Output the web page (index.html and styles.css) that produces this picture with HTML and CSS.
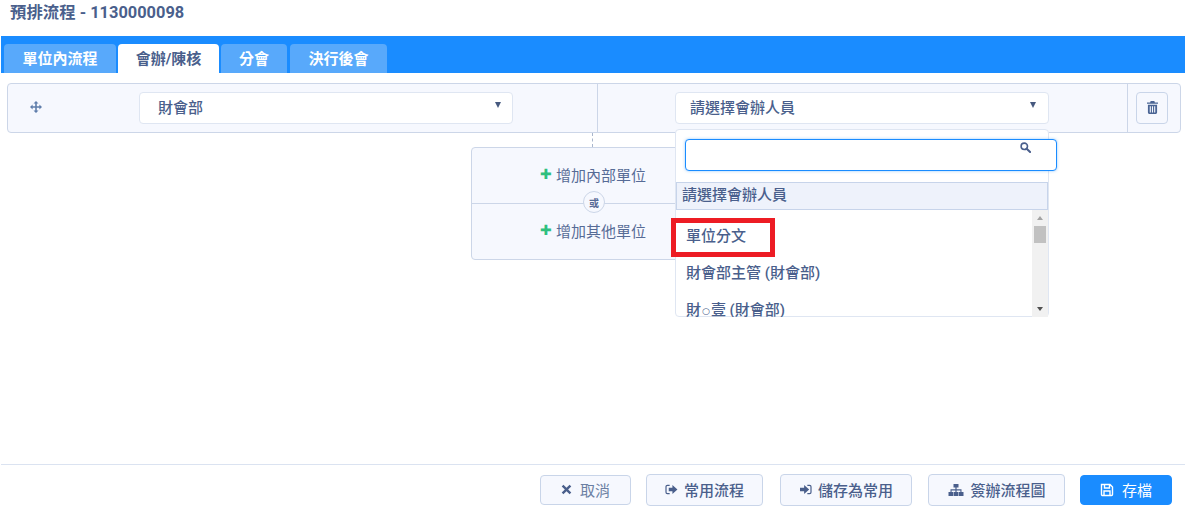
FILE: index.html
```html
<!DOCTYPE html>
<html lang="zh-Hant">
<head>
<meta charset="utf-8">
<title>預排流程</title>
<link rel="stylesheet" href="styles.css">
</head>
<body>
<div class="page">
  <h1 class="title">預排流程 - 1130000098</h1>
  <nav class="tabbar">
    <a class="tab tab-a">單位內流程</a>
    <a class="tab tab-b active">會辦/陳核</a>
    <a class="tab tab-c">分會</a>
    <a class="tab tab-d">決行後會</a>
  </nav>
  <main class="content">
    <div class="row">
      <div class="cell cell-move">
        <svg class="move" viewBox="0 0 12 12" width="12" height="12"><path d="M6 0 8.500 2.600H6.800V5.200H9.400V3.500L12 6 9.400 8.500V6.800H6.800V9.400H8.500L6 12 3.500 9.400H5.200V6.800H2.600V8.500L0 6 2.600 3.500V5.200H5.200V2.600H3.500Z"/></svg>
        <div class="select select-unit"><span>財會部</span><i class="caret"></i></div>
      </div>
      <div class="cell cell-person">
        <div class="select select-person"><span>請選擇會辦人員</span><i class="caret"></i></div>
      </div>
      <div class="cell cell-del">
        <button class="icon-btn" aria-label="刪除">
          <svg viewBox="0 0 12 14" width="11" height="13"><path d="M4 0H8L8.600 1.500H12V3H0V1.500H3.400ZM1 4H11V12.500C11 13.300 10.400 14 9.600 14H2.400C1.600 14 1 13.300 1 12.500ZM3 5.500V12.500H4.200V5.500ZM5.400 5.500V12.500H6.600V5.500ZM7.800 5.500V12.500H9V5.500Z"/></svg>
        </button>
      </div>
    </div>
    <div class="connector"></div>
    <div class="addbox">
      <div class="addline"><b class="plus">✚</b>增加內部單位</div>
      <div class="addline addline-b"><b class="plus">✚</b>增加其他單位</div>
      <span class="or">或</span>
    </div>
    <div class="dropdown">
      <div class="search">
        <svg viewBox="0 0 12 12" width="11" height="11"><circle cx="4.700" cy="4.700" r="3.500" fill="none" stroke="currentColor" stroke-width="1.700"/><path d="M7.300 7.300 11 11" stroke="currentColor" stroke-width="2.200" stroke-linecap="round"/></svg>
      </div>
      <div class="opt-head">請選擇會辦人員</div>
      <div class="opt-list">
        <ul class="opts">
          <li class="opt">單位分文</li>
          <li class="opt">財會部主管 (財會部)</li>
          <li class="opt">財<span class="ring">○</span>壹 (財會部)</li>
        </ul>
        <div class="scrollbar">
          <i class="arrow up"></i>
          <i class="thumb"></i>
          <i class="arrow down"></i>
        </div>
      </div>
      <div class="marker"></div>
    </div>
  </main>
  <footer class="footer">
    <button class="btn btn-cancel"><svg viewBox="0 0 12 12" width="11" height="11"><path d="M2.600.8 6 4.200 9.400.8 11.200 2.600 7.800 6 11.200 9.400 9.400 11.200 6 7.800 2.600 11.200.8 9.400 4.200 6 .8 2.600Z"/></svg><span class="light muted">取消</span></button>
    <button class="btn btn-flow"><svg viewBox="0 0 14 12" width="13" height="11"><path d="M5 1.500H2.500C1.700 1.500 1 2.200 1 3V9C1 9.800 1.700 10.500 2.500 10.500H5" fill="none" stroke="currentColor" stroke-width="1.300"/><path d="M8 1 13.500 6 8 11V8H4V4H8Z"/></svg>常用流程</button>
    <button class="btn btn-save"><svg viewBox="0 0 14 12" width="13" height="11"><path d="M9 1.500H11.500C12.300 1.500 13 2.200 13 3V9C13 9.800 12.300 10.500 11.500 10.500H9" fill="none" stroke="currentColor" stroke-width="1.300"/><path d="M5.500 1 11 6 5.500 11V8H1V4H5.500Z"/></svg>儲存為常用</button>
    <button class="btn btn-chart"><svg viewBox="0 0 16 12" width="16" height="12"><path d="M5.500 0H10.500V3.500H8.600V5.300H13.500V8H15.500V12H10.500V8H12.400V6.500H8.600V8H10V12H6V8H7.400V6.500H3.600V8H5.500V12H.5V8H2.500V5.300H7.400V3.500H5.500Z"/></svg>簽辦流程圖</button>
    <button class="btn btn-primary"><svg viewBox="0 0 14 14" width="14" height="14"><path d="M1.500 1.500H10L12.500 4V11.500C12.500 12 12 12.500 11.500 12.500H2.500C2 12.500 1.500 12 1.500 11.500ZM4.500 1.500V5H9.500V1.500M4 12.500V8H10V12.500" fill="none" stroke="currentColor" stroke-width="1.400"/></svg><span class="light">存檔</span></button>
  </footer>
</div>
</body>
</html>
```
FILE: styles.css
```css
* { box-sizing: border-box; }
html, body { margin: 0; padding: 0; }
body {
  width: 1185px;
  height: 511px;
  overflow: hidden;
  background: #fff;
  color: #4a5f8c;
  font-family: Roboto, "Noto Sans CJK TC", sans-serif;
}
.page { display: flex; flex-direction: column; height: 511px; }
.title {
  margin: 0;
  height: 36px;
  padding: 2px 0 0 10px;
  font-size: 16.400px;
  line-height: 22px;
  font-weight: 700;
  color: #4a5f8c;
}
.tabbar {
  display: flex;
  gap: 2px;
  height: 37px;
  margin-left: 1px;
  padding: 8px 0 0 3px;
  background: #1a8cff;
}
.tab {
  display: flex;
  align-items: center;
  justify-content: center;
  height: 29px;
  padding-bottom: 2px;
  border-radius: 4px 4px 0 0;
  background: #58a9fb;
  color: #fff;
  font-size: 15px;
  font-weight: 700;
}
.tab-a { width: 112px; }
.tab-b { width: 101px; }
.tab-c { width: 66px; }
.tab-d { width: 97px; margin-left: 1px; }
.tab.active { background: #fff; color: #4a5f8c; }

.content { position: relative; flex: 1; padding: 10px 4px 0 7px; }
.row {
  display: flex;
  height: 50px;
  border: 1px solid #ccd6e8;
  border-radius: 4px;
  background: #f6f8fe;
}
.cell { display: flex; align-items: center; height: 100%; }
.cell-move { width: 590px; padding-left: 22px; border-right: 1px solid #ccd6e8; }
.cell-person { width: 530px; padding-left: 77px; border-right: 1px solid #ccd6e8; }
.cell-del { flex: 1; padding-left: 8px; }
.move { fill: #5f7dab; flex: none; margin-top: -3px; }
.select {
  display: flex;
  align-items: center;
  justify-content: space-between;
  height: 32px;
  padding: 0 12px 3px 14px;
  margin-top: -1px;
  border: 1px solid #dfe6f2;
  border-radius: 4px;
  background: #fff;
  font-size: 15px;
  font-weight: 500;
}
.select-unit { width: 374px; margin-left: 97px; padding-left: 18px; padding-right: 11px; }
.select-person { width: 374px; }
.caret {
  width: 0;
  height: 0;
  margin-top: -3px;
  border-left: 3.500px solid transparent;
  border-right: 3.500px solid transparent;
  border-top: 6px solid #46597f;
}
.icon-btn {
  display: flex;
  align-items: center;
  justify-content: center;
  width: 32px;
  height: 32px;
  margin-top: -1px;
  padding: 0;
  border: 1px solid #c9d5e9;
  border-radius: 4px;
  background: #f6f8fe;
  fill: #4a6494;
}
.connector { width: 0; height: 14px; margin-left: 585px; border-left: 1px dashed #a9b6cc; }
.addbox {
  position: relative;
  width: 230px;
  height: 113px;
  margin-left: 464px;
  border: 1px solid #ccd6e8;
  border-radius: 4px;
  background: #f6f8fe;
  font-size: 15px;
  color: #566b96;
}
.addline {
  display: flex;
  align-items: center;
  height: 55px;
  padding: 0 0 3px 68px;
}
.addline-b { height: 56px; border-top: 1px solid #ccd6e8; padding-bottom: 3px; }
.plus { width: 16px; color: #2fc07f; font-size: 14px; line-height: 1; font-family: "DejaVu Sans", sans-serif; }
.or {
  position: absolute;
  left: 111px;
  top: 43px;
  display: flex;
  align-items: center;
  justify-content: center;
  width: 22px;
  height: 22px;
  border: 1px solid #ccd6e8;
  border-radius: 50%;
  background: #f6f8fe;
  font-size: 10px;
  font-weight: 700;
}
.dropdown {
  position: absolute;
  left: 675px;
  top: 56px;
  width: 374px;
  height: 188px;
  border: 1px solid #dfe6f2;
  border-radius: 4px;
  background: #fff;
}
.search {
  position: relative;
  display: flex;
  justify-content: flex-end;
  width: 372px;
  height: 32px;
  margin: 9px 0 11px 9px;
  padding: 2px 25px 0 0;
  border: 1px solid #1a8cff;
  border-radius: 4px;
  background: #fff;
  box-shadow: 0 0 3px rgba(43, 149, 251, .5);
  color: #4a5f8c;
}
.opt-head {
  height: 28px;
  padding-left: 5px;
  border: 1px solid #c7d4ea;
  background: #eef2fb;
  font-size: 15px;
  line-height: 25px;
  font-weight: 500;
}
.opt-list { display: flex; height: 107px; }
.opts {
  flex: 1;
  height: 107px;
  margin: 0;
  padding: 8px 0 0;
  overflow: hidden;
  list-style: none;
  font-size: 15px;
  font-weight: 500;
}
.opt { height: 37px; padding-left: 10px; line-height: 36px; white-space: nowrap; }
.ring { margin: 0 1px; font-family: "DejaVu Sans", sans-serif; font-size: 9px; font-weight: 400; vertical-align: 1.500px; }
.marker {
  position: absolute;
  left: -5px;
  top: 88px;
  width: 104px;
  height: 39px;
  border: 5px solid #ed1c24;
}
.scrollbar {
  position: relative;
  width: 16px;
  background: #f1f1f1;
}
.thumb { position: absolute; left: 2px; top: 16px; width: 12px; height: 17px; background: #c1c1c1; }
.arrow { position: absolute; left: 4.500px; width: 0; height: 0; border-left: 3.500px solid transparent; border-right: 3.500px solid transparent; }
.arrow.up { top: 6px; border-bottom: 4px solid #a3a3a3; }
.arrow.down { bottom: 6px; border-top: 4px solid #505050; }

.footer {
  display: flex;
  justify-content: flex-end;
  align-items: center;
  height: 47px;
  margin-left: 1px;
  padding: 4px 13px 0 0;
  border-top: 1px solid #dbe3f1;
}
.btn {
  display: flex;
  align-items: center;
  justify-content: center;
  gap: 6px;
  height: 32px;
  padding: 0 0 1px;
  border: 1px solid #c9d5e9;
  border-radius: 4px;
  background: #f6f8fe;
  color: #4a5f8c;
  fill: currentColor;
  font-family: inherit;
  font-size: 15px;
  font-weight: 500;
}
.btn-cancel { width: 91px; height: 30px; gap: 8px; }
.btn-flow { width: 117px; margin-left: 15px; }
.btn-save { width: 132px; margin-left: 17px; }
.btn-chart { width: 137px; margin-left: 16px; padding-left: 1px; gap: 6px; }
.btn-primary { width: 92px; height: 30px; margin-left: 15px; gap: 8px; border-color: #1a8cff; background: #1a8cff; color: #fff; }
.light { font-weight: 400; }
.muted { color: #6b7fa3; }
```
